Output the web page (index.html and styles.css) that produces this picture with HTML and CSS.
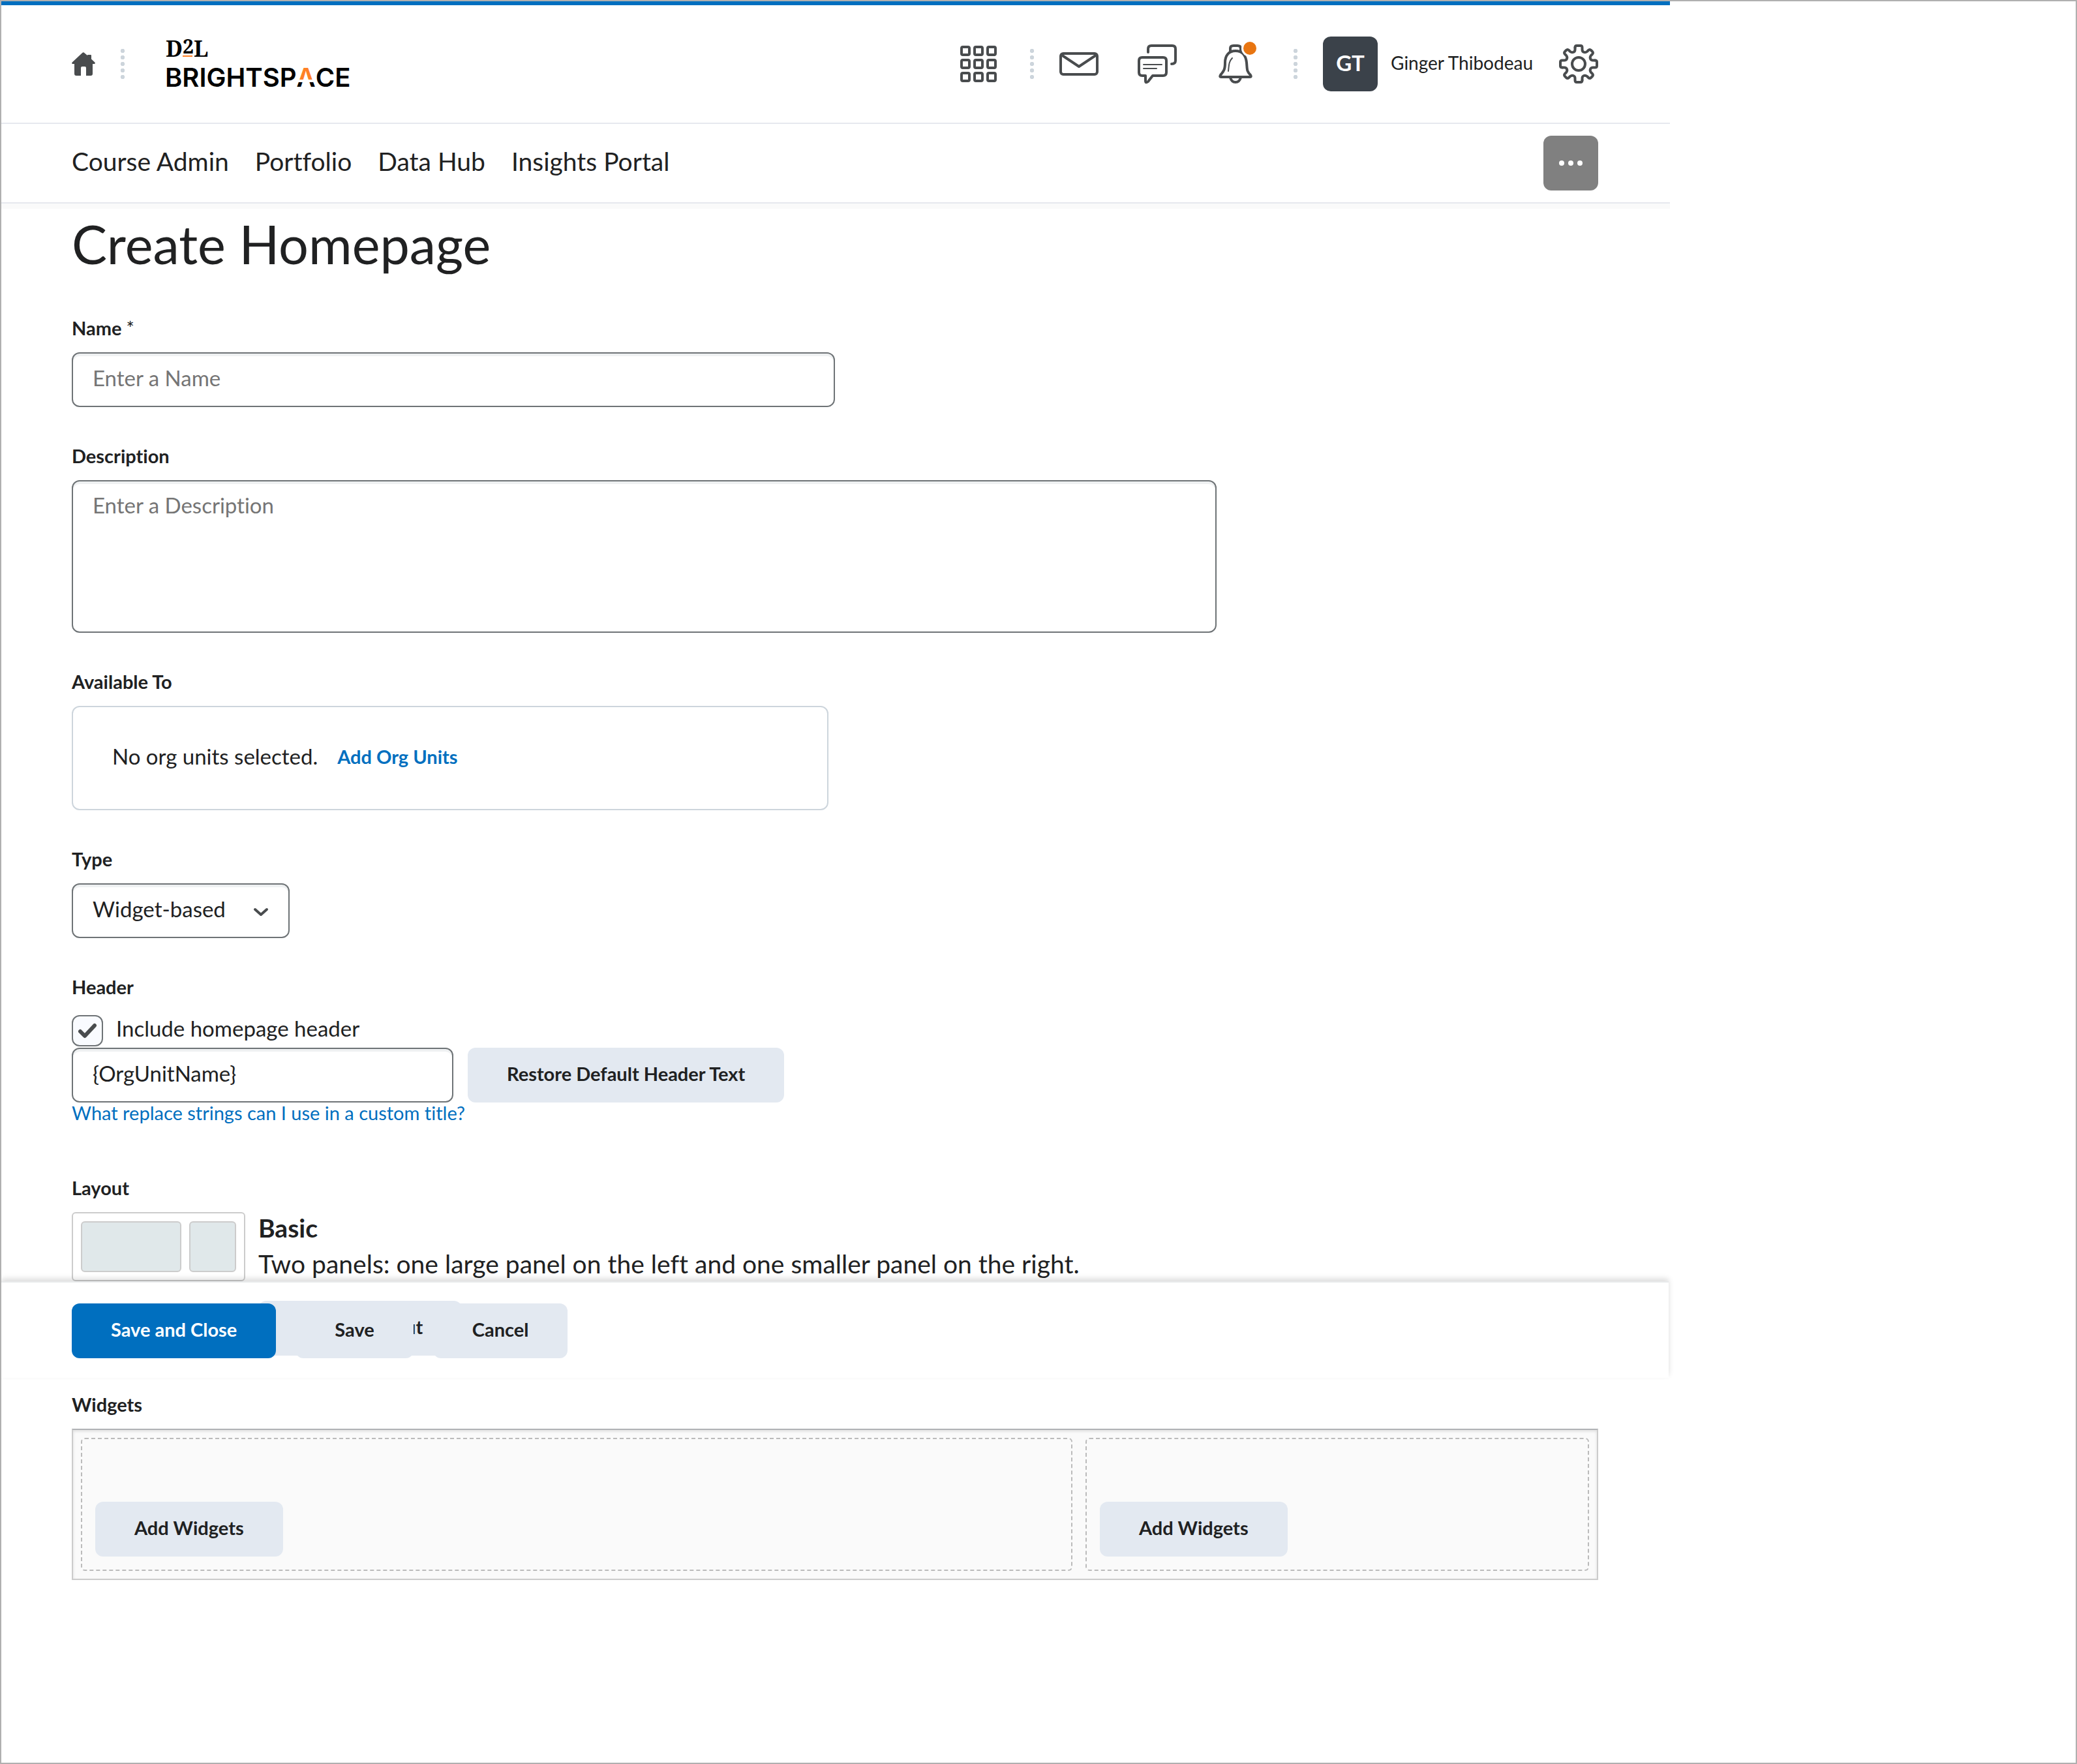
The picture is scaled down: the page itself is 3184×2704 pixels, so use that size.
FILE: index.html
```html
<!DOCTYPE html>
<html lang="en">
<head>
    <meta charset="UTF-8">
    <meta name="viewport" content="width=device-width, initial-scale=1.0">
    <title>Create Homepage</title>
    <link rel="stylesheet" href="styles.css">
</head>
<body>

<div class="page">
    <header class="top-bar">
        <a class="icon-link" href="#" aria-label="Home">
            <svg class="home-icon" viewBox="0 0 36 36">
                <path fill="#494c4e" d="M18 0 24 5V4.500Q24 4 25 4H29Q30 4 30 5V10.500L35.300 15.500Q36.500 17 35 18H32V33Q32 36 29 36H22V24Q22 22 20 22H16Q14 22 14 24V36H7Q4 36 4 33V18H1Q-.5 17 .7 15.500L16.500 .8Q18-.5 19 .8Z"/>
            </svg>
        </a>
        <span class="dots"></span>
        <a class="logo" href="#" aria-label="D2L Brightspace">
            <svg width="284" height="100" viewBox="0 0 284 100">
                <defs>
                    <linearGradient id="mark" gradientUnits="userSpaceOnUse" x1="0" y1="54" x2="0" y2="85">
                        <stop offset="0.64" stop-color="#ff8126"/>
                        <stop offset="0.64" stop-color="#fff"/>
                        <stop offset="0.76" stop-color="#fff"/>
                        <stop offset="0.76" stop-color="#000"/>
                    </linearGradient>
                </defs>
                <text class="logo-serif" x="-1" y="39">D<tspan class="logo-two" dy="-5">2</tspan><tspan dy="5">L</tspan></text>
                <rect x="25" y="37" width="15" height="2" fill="#ff8126"/>
                <text class="logo-sans" x="-2" y="85">BRIGHTSP<tspan fill="url(#mark)">Λ</tspan>CE</text>
            </svg>
        </a>

        <div class="tools">
            <button class="icon-button" type="button" aria-label="Select a course">
                <svg viewBox="0 0 60 60">
                    <g class="line">
                        <rect x="4" y="4" width="12" height="12" rx="2"/><rect x="24" y="4" width="12" height="12" rx="2"/><rect x="44" y="4" width="12" height="12" rx="2"/>
                        <rect x="4" y="24" width="12" height="12" rx="2"/><rect x="24" y="24" width="12" height="12" rx="2"/><rect x="44" y="24" width="12" height="12" rx="2"/>
                        <rect x="4" y="44" width="12" height="12" rx="2"/><rect x="24" y="44" width="12" height="12" rx="2"/><rect x="44" y="44" width="12" height="12" rx="2"/>
                    </g>
                </svg>
            </button>
            <span class="dots"></span>
            <button class="icon-button" type="button" aria-label="Message alerts">
                <svg viewBox="0 0 60 60">
                    <g class="line">
                        <rect x="2" y="14" width="56" height="32" rx="4"/>
                        <path d="M3 16 30 34 57 16"/>
                    </g>
                </svg>
            </button>
            <button class="icon-button" type="button" aria-label="Subscription alerts">
                <svg viewBox="0 0 60 60">
                    <g class="line">
                        <path d="M16 12V7Q16 2 21 2H53Q58 2 58 7V25Q58 30 52 30"/>
                        <path d="M7 20H39Q44 20 44 25V43Q44 48 39 48H23L16 57Q12 60 12 56V48H7Q2 48 2 43V25Q2 20 7 20Z"/>
                        <path class="thin" d="M9 31H37M9 37H29"/>
                    </g>
                </svg>
            </button>
            <button class="icon-button" type="button" aria-label="Update alerts">
                <svg viewBox="0 0 60 60">
                    <g class="line">
                        <path d="M30 10C19 10 14 18 14 28C14 39 12 41 7 47Q5 50 8 50H52Q55 50 53 47C47 41 48 39 47 28C46 18 41 10 30 10Z"/>
                        <path d="M22 11V6Q22 2 27 2H33Q38 2 38 6V11M22 51Q24 58 30 58T38 51"/>
                        <path class="thin" d="M25 21C20 26 20 31 19 41"/>
                    </g>
                    <circle cx="52" cy="6" r="13" fill="#fff"/>
                    <circle cx="52" cy="6" r="10" fill="#e87511"/>
                </svg>
            </button>
            <span class="dots"></span>
            <button class="user" type="button">
                <span class="avatar">GT</span>
                <span class="user-name">Ginger Thibodeau</span>
            </button>
            <button class="icon-button" type="button" aria-label="Admin tools">
                <svg viewBox="0 0 60 60">
                    <g class="line">
                        <path id="cog" d="M24.500 5Q24.500 2 27 2H33Q35.500 2 35.500 5V8Q35.500 11 38 12T43 11L45 9Q47 7 49 9L51 11Q53 13 51 15L49 17Q47 19.500 48 22T52 24.500H55"/>
                        <use href="#cog" transform="rotate(90 30 30)"/>
                        <use href="#cog" transform="rotate(180 30 30)"/>
                        <use href="#cog" transform="rotate(270 30 30)"/>
                        <circle cx="30" cy="30" r="10"/>
                    </g>
                </svg>
            </button>
        </div>
    </header>

    <nav class="nav-bar">
        <div class="nav-links">
            <a href="#">Course Admin</a>
            <a href="#">Portfolio</a>
            <a href="#">Data Hub</a>
            <a href="#">Insights Portal</a>
        </div>
        <button class="more-button" type="button" aria-label="More actions"><i></i><i></i><i></i></button>
    </nav>

    <main class="content">
        <h1>Create Homepage</h1>

        <form>
            <div class="field">
                <label class="field-label" for="name">Name <span class="required">*</span></label>
                <input class="text-box half" type="text" id="name" placeholder="Enter a Name" required>
            </div>

            <div class="field">
                <label class="field-label" for="description">Description</label>
                <textarea class="text-box description" id="description" placeholder="Enter a Description"></textarea>
            </div>

            <div class="field">
                <h2 class="field-label">Available To</h2>
                <div class="org-units">
                    <span>No org units selected.</span>
                    <a href="#">Add Org Units</a>
                </div>
            </div>

            <div class="field">
                <label class="field-label" for="type">Type</label>
                <div class="select-wrap">
                    <select class="text-box" id="type">
                        <option>Widget-based</option>
                    </select>
                    <svg class="chevron" viewBox="0 0 24 14"><path d="M3 3 12 11 21 3"/></svg>
                </div>
            </div>

            <div class="field header-field">
                <h2 class="field-label">Header</h2>
                <div class="check-row">
                    <span class="check-wrap">
                        <input type="checkbox" id="include-header" checked>
                        <svg class="tick" viewBox="0 0 28 24"><path d="M3 13 10 20 25 4"/></svg>
                    </span>
                    <label for="include-header">Include homepage header</label>
                </div>
                <div class="header-row">
                    <input class="text-box quarter" type="text" value="{OrgUnitName}" aria-label="Header text">
                    <button class="button" type="button">Restore Default Header Text</button>
                </div>
                <a class="help-link" href="#">What replace strings can I use in a custom title?</a>
            </div>

            <div class="field">
                <h2 class="field-label">Layout</h2>
                <div class="layout-row">
                    <div class="layout-preview">
                        <div class="preview-large"></div>
                        <div class="preview-small"></div>
                    </div>
                    <div class="layout-info">
                        <h3>Basic</h3>
                        <p>Two panels: one large panel on the left and one smaller panel on the right.</p>
                        <button class="button change-layout" type="button">Change Layout</button>
                    </div>
                </div>
            </div>

            <div class="field">
                <h2 class="field-label">Widgets</h2>
                <div class="widgets">
                    <div class="widget-panel"><button class="button" type="button">Add Widgets</button></div>
                    <div class="widget-panel"><button class="button" type="button">Add Widgets</button></div>
                </div>
            </div>

            <!-- Floating save bar, lies over the form -->
            <div class="save-bar">
                <button class="button primary" type="submit">Save and Close</button>
                <button class="button" type="button">Save</button>
                <button class="button" type="button">Cancel</button>
            </div>
        </form>
    </main>
</div>

</body>
</html>
```
FILE: styles.css
```css
* {
    box-sizing: border-box;
}
body {
    margin: 0;
    min-height: 100vh;
    border: 2px solid #b0b0b0;
    background: #fff;
    color: #202122;
    font-family: Lato, sans-serif;
    font-size: 33px;
    font-variant-ligatures: none;
}
h1, h2, h3, p {
    margin: 0;
}
a {
    color: #006fbf;
    text-decoration: none;
}
button, input, select, textarea {
    font-family: inherit;
    font-variant-ligatures: inherit;
    color: inherit;
}
button {
    border: none;
    background: none;
    padding: 0;
    cursor: pointer;
}
svg {
    display: block;
}
.page {
    position: relative;
    max-width: 2558px;
    border-top: 6px solid #006fbf;
}

/* Top bar */
.top-bar {
    display: flex;
    align-items: center;
    height: 182px;
    padding: 0 110px 0 108px;
    border-bottom: 2px solid #e6e8ee;
}
.home-icon {
    width: 36px;
    height: 36px;
}
.dots {
    width: 6px;
    height: 46px;
    margin: 0 39px;
    background: radial-gradient(circle at 3px 3px, #cdd5dc 3px, transparent 3px) 0 0 / 6px 10px;
}
.logo {
    margin-left: 25px;
}
.logo svg {
    overflow: visible;
}
.logo-serif {
    font-family: "Noto Serif", "Liberation Serif", serif;
    font-size: 34px;
    font-weight: bold;
}
.logo-two {
    font-size: 30px;
}
.logo-sans {
    font-family: Inter, sans-serif;
    font-size: 40px;
    font-weight: 600;
}
.tools {
    display: flex;
    align-items: center;
    margin-left: auto;
}
.tools .icon-button + .icon-button {
    margin-left: 60px;
}
.tools .icon-button + .dots {
    margin-left: 59px;
}
.tools .icon-button:first-child + .dots {
    margin-left: 49px;
}
.icon-button svg {
    width: 60px;
    height: 60px;
    overflow: visible;
}
.line {
    fill: none;
    stroke: #494c4e;
    stroke-width: 4;
    stroke-linecap: round;
    stroke-linejoin: round;
}
.thin {
    stroke-width: 2;
}
.user {
    display: flex;
    align-items: center;
    gap: 20px;
    margin-right: 40px;
}
.avatar {
    width: 84px;
    height: 84px;
    padding-bottom: 4px;
    border-radius: 12px;
    background: #3b424a;
    color: #fff;
    font-size: 33px;
    font-weight: bold;
    line-height: 80px;
}
.user-name {
    padding-bottom: 4px;
    font-size: 28px;
}

/* Navigation */
.nav-bar {
    display: flex;
    align-items: center;
    justify-content: space-between;
    height: 122px;
    padding: 0 110px 0 108px;
    border-bottom: 2px solid #e6e8ee;
    box-shadow: 0 8px 0 #fafafa;
}
.nav-links {
    display: flex;
    gap: 40px;
    padding-bottom: 6px;
    font-size: 39px;
}
.nav-links a {
    color: #202122;
}
.more-button {
    display: flex;
    align-items: center;
    justify-content: center;
    gap: 6px;
    width: 84px;
    height: 84px;
    border-radius: 12px;
    background: #808080;
}
.more-button i {
    width: 8px;
    height: 8px;
    border-radius: 50%;
    background: #fff;
}

/* Form */
.content {
    padding: 14px 110px 0 108px;
}
h1 {
    margin-bottom: 62px;
    font-size: 81px;
    font-weight: normal;
    line-height: 96px;
}
.field {
    margin-bottom: 56px;
}
.field-label {
    display: block;
    margin-bottom: 18px;
    font-size: 29px;
    font-weight: bold;
    line-height: 38px;
}
.required {
    font-weight: normal;
}
.text-box {
    display: block;
    height: 84px;
    padding: 0 30px 6px;
    border: 2px solid #6e7376;
    border-radius: 12px;
    background: #fff;
    box-shadow: inset 0 4px 0 #eff1f2;
    font-size: 33px;
}
.text-box::placeholder {
    color: #757575;
}
.half {
    width: 50%;
}
.quarter {
    width: 25%;
}
.description {
    width: 75%;
    height: 234px;
    padding-top: 12px;
    line-height: 48px;
    resize: none;
}
.org-units {
    display: flex;
    align-items: center;
    gap: 30px;
    max-width: 1160px;
    height: 160px;
    padding: 0 60px 6px;
    border: 2px solid #cdd5dc;
    border-radius: 12px;
}
.org-units a {
    font-size: 29px;
    font-weight: bold;
}
.select-wrap {
    position: relative;
    width: 334px;
}
.select-wrap select {
    width: 100%;
    appearance: none;
}
.chevron {
    position: absolute;
    right: 32px;
    top: 37px;
    width: 24px;
    height: 14px;
    pointer-events: none;
}
.chevron path,
.tick path {
    fill: none;
    stroke: #494c4e;
    stroke-width: 4;
    stroke-linecap: round;
    stroke-linejoin: round;
}
.header-field {
    padding-bottom: 24px;
}
.check-row {
    display: flex;
    gap: 20px;
    margin: 24px 0 2px;
    line-height: 40px;
}
.check-wrap {
    position: relative;
    width: 48px;
    height: 48px;
}
.check-wrap input {
    display: block;
    width: 48px;
    height: 48px;
    margin: 0;
    border: 2px solid #6e7376;
    border-radius: 12px;
    background: #f9fbff;
    appearance: none;
}
.tick {
    position: absolute;
    left: 10px;
    top: 12px;
    width: 28px;
    height: 24px;
    pointer-events: none;
}
.tick path {
    stroke-width: 6;
}
.header-row {
    display: flex;
    gap: 22px;
}
.help-link {
    display: block;
    font-size: 29px;
    line-height: 32px;
}
.button {
    height: 84px;
    padding: 0 60px 6px;
    border-radius: 12px;
    background: #e3e9f1;
    font-size: 29px;
    font-weight: bold;
    white-space: nowrap;
}
.primary {
    background: #006fbf;
    color: #fff;
}

/* Layout preview */
.layout-row {
    display: flex;
    align-items: flex-start;
    gap: 20px;
}
.layout-preview {
    display: flex;
    gap: 12px;
    width: 266px;
    height: 106px;
    padding: 12px;
    border: 2px solid #ccc;
    border-radius: 6px;
}
.preview-large,
.preview-small {
    flex: 2;
    border: 2px solid #ccc;
    border-radius: 6px;
    background: #e0e8ea;
}
.preview-small {
    flex: none;
    width: 72px;
}
.layout-info h3 {
    font-size: 39px;
    line-height: 48px;
}
.layout-info p {
    margin-bottom: 26px;
    font-size: 39px;
    line-height: 62px;
}
.change-layout {
    position: relative;
    z-index: 1;
}

/* Widgets */
.widgets {
    display: grid;
    grid-template-columns: 63fr 32fr;
    gap: 20px;
    padding: 12px;
    border: 2px solid #ccc;
    border-top-color: #b0b2b5;
    background: #fafafa;
    box-shadow: inset 0 2px 4px #ddd;
}
.widget-panel {
    padding: 96px 20px 20px;
    border: 2px dashed #bbb;
    border-radius: 6px;
}
.widget-panel .button {
    display: block;
}

/* Save bar */
.save-bar {
    position: absolute;
    left: 0;
    right: 2px;
    top: 1956px;
    display: flex;
    gap: 30px;
    padding: 32px 108px 30px;
    border-top: 2px solid #e8eaeb;
    background: #fff;
    box-shadow: 0 -4px 8px rgba(0, 0, 0, 0.14);
}
.save-bar .button {
    position: relative;
    z-index: 2;
}
```
